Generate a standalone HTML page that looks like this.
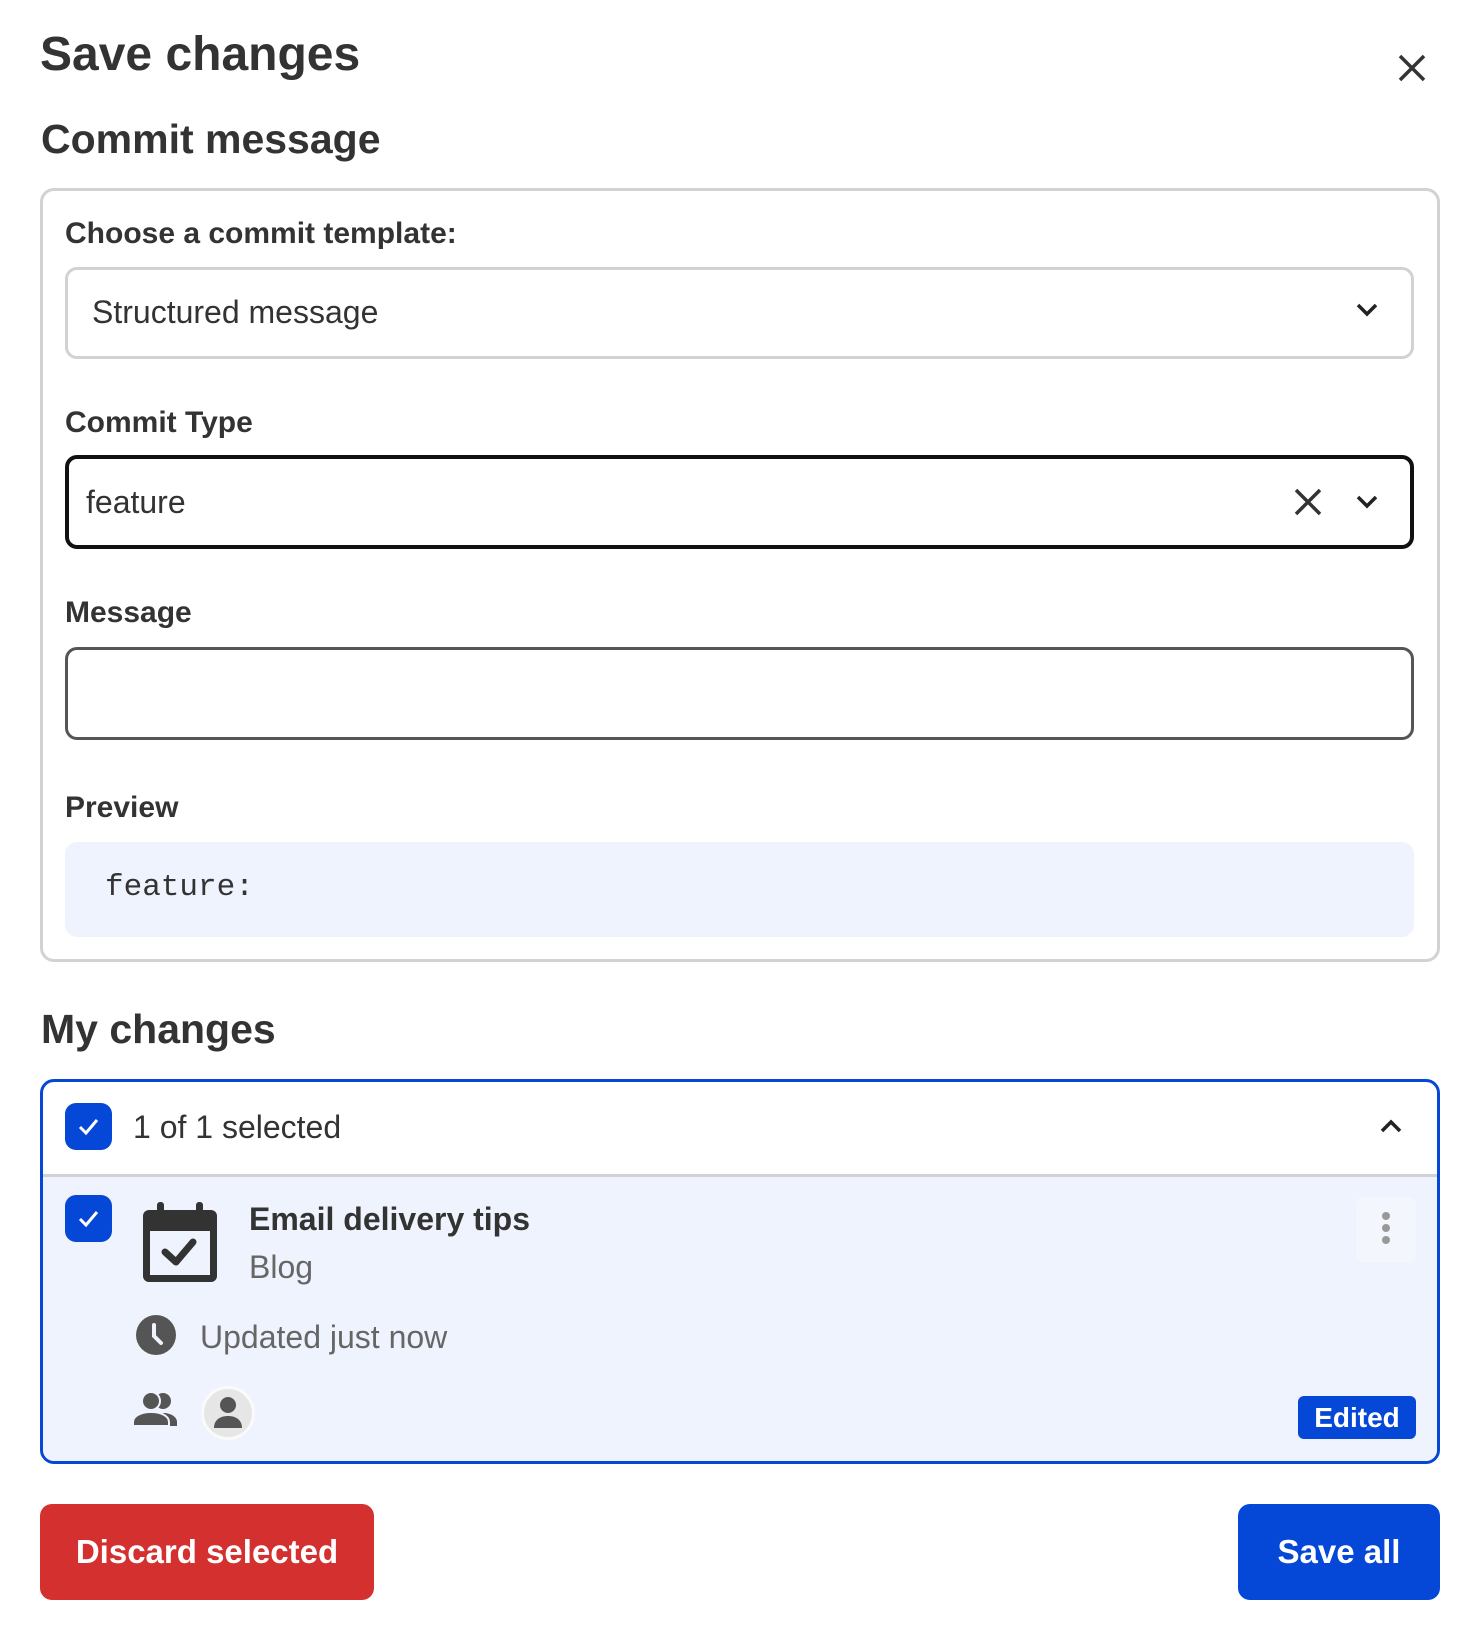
<!DOCTYPE html>
<html><head><style>
*{box-sizing:border-box;margin:0;padding:0}
html,body{width:1480px;height:1640px;background:#fff;overflow:hidden;font-family:"Liberation Sans",sans-serif;color:#333}
.a{position:absolute}
.h{font-weight:bold;color:#333}
.lbl{font-size:30px;font-weight:bold;color:#333;position:absolute;left:65px}
.box{position:absolute;left:65px;width:1349px;border-radius:12px}
.cb{position:absolute;width:47px;height:47px;background:#0547d6;border-radius:11px}
</style></head><body>
<div class="a h" style="left:40px;top:27px;font-size:48px">Save changes</div>
<svg class="a" style="left:1397px;top:53px" width="30" height="30" viewBox="0 0 30 30"><path d="M3 3L27 27M27 3L3 27" stroke="#333" stroke-width="3.5" fill="none"/></svg>
<div class="a h" style="left:41px;top:116px;font-size:41px">Commit message</div>

<div class="a" style="left:40px;top:188px;width:1400px;height:774px;border:3px solid #d2d2d2;border-radius:14px"></div>
<div class="lbl" style="top:217px">Choose a commit template:</div>
<div class="box" style="top:267px;height:92px;border:3px solid #d2d2d2"></div>
<div class="a" style="left:92px;top:294px;font-size:32px;color:#333">Structured message</div>
<svg class="a" style="left:1355px;top:302px" width="24" height="16" viewBox="0 0 24 16"><path d="M3 3L12 12L21 3" stroke="#222" stroke-width="3.5" fill="none"/></svg>

<div class="lbl" style="top:406px">Commit Type</div>
<div class="box" style="top:455px;height:94px;border:4px solid #111"></div>
<div class="a" style="left:86px;top:484px;font-size:32px;color:#333">feature</div>
<svg class="a" style="left:1293px;top:487px" width="30" height="30" viewBox="0 0 30 30"><path d="M3 3L27 27M27 3L3 27" stroke="#333" stroke-width="3.5" fill="none"/></svg>
<svg class="a" style="left:1355px;top:494px" width="24" height="16" viewBox="0 0 24 16"><path d="M3 3L12 12L21 3" stroke="#222" stroke-width="3.5" fill="none"/></svg>

<div class="lbl" style="top:596px">Message</div>
<div class="box" style="top:647px;height:93px;border:3px solid #555"></div>

<div class="lbl" style="top:791px">Preview</div>
<div class="box" style="top:842px;height:95px;background:#eef3fd"></div>
<div class="a" style="left:105px;top:870px;font-size:31px;font-family:'Liberation Mono',monospace;color:#333">feature:</div>

<div class="a h" style="left:41px;top:1006px;font-size:41px">My changes</div>

<div class="a" style="left:40px;top:1079px;width:1400px;height:385px;border:3px solid #0547d6;border-radius:14px;overflow:hidden">
  <div class="a" style="left:0;top:92px;width:1400px;height:300px;background:#eff3fd;border-top:3px solid #d2d2d2"></div>
</div>
<div class="cb" style="left:65px;top:1103px"></div>
<svg class="a" style="left:65px;top:1103px" width="47" height="47" viewBox="0 0 47 47"><path d="M15 24L21 30L32 17" stroke="#fff" stroke-width="3" fill="none"/></svg>
<div class="a" style="left:133px;top:1109px;font-size:32px;color:#333">1 of 1 selected</div>
<svg class="a" style="left:1379px;top:1118px" width="24" height="16" viewBox="0 0 24 16"><path d="M3 13L12 4L21 13" stroke="#222" stroke-width="3.5" fill="none"/></svg>

<div class="cb" style="left:65px;top:1195px"></div>
<svg class="a" style="left:65px;top:1195px" width="47" height="47" viewBox="0 0 47 47"><path d="M15 24L21 30L32 17" stroke="#fff" stroke-width="3" fill="none"/></svg>
<svg class="a" style="left:143px;top:1201px" width="74" height="82" viewBox="0 0 74 82"><rect x="0" y="9" width="74" height="72" rx="6" fill="#333"/><rect x="7" y="30" width="60" height="44" fill="#eff3fd"/><rect x="14" y="1" width="7" height="14" rx="3" fill="#333"/><rect x="53" y="1" width="7" height="14" rx="3" fill="#333"/><path d="M22 51L33 61L50 41" stroke="#333" stroke-width="7" fill="none" stroke-linecap="round" stroke-linejoin="round"/></svg>
<div class="a h" style="left:249px;top:1201px;font-size:32px">Email delivery tips</div>
<div class="a" style="left:249px;top:1249px;font-size:32px;color:#666">Blog</div>
<div class="a" style="left:1356px;top:1197px;width:60px;height:66px;background:#f3f6fd;border-radius:8px"></div>
<svg class="a" style="left:1380px;top:1210px" width="12" height="36" viewBox="0 0 12 36"><circle cx="6" cy="6" r="4" fill="#999"/><circle cx="6" cy="18" r="4" fill="#999"/><circle cx="6" cy="30" r="4" fill="#999"/></svg>

<svg class="a" style="left:135px;top:1314px" width="42" height="42" viewBox="0 0 42 42"><circle cx="21" cy="21" r="20" fill="#555"/><path d="M19 11V22L26 29" stroke="#eff3fd" stroke-width="4" fill="none" stroke-linecap="round"/></svg>
<div class="a" style="left:200px;top:1319px;font-size:32px;color:#666">Updated just now</div>

<svg class="a" style="left:133px;top:1391px" width="46" height="36" viewBox="0 0 46 36"><circle cx="30" cy="10" r="8" fill="#555"/><path d="M30 22c8 0 14 4 14 9v4H30z" fill="#555"/><circle cx="18" cy="10" r="9" fill="#555" stroke="#eff3fd" stroke-width="2"/><path d="M0 35v-4c0-6 8-10 18-10s18 4 18 10v4z" fill="#555" stroke="#eff3fd" stroke-width="2"/></svg>
<div class="a" style="left:201px;top:1386px;width:54px;height:54px;border-radius:50%;background:#e6e6e6;border:3px solid #fafafa"></div>
<svg class="a" style="left:211px;top:1394px" width="34" height="36" viewBox="0 0 34 36"><circle cx="17" cy="11" r="8" fill="#555"/><path d="M3 34c0-8 6-12 14-12s14 4 14 12z" fill="#555"/></svg>
<div class="a" style="left:1298px;top:1396px;width:118px;height:43px;background:#0547d6;border-radius:6px;color:#fff;font-weight:bold;font-size:28px;text-align:center;line-height:43px">Edited</div>

<div class="a" style="left:40px;top:1504px;width:334px;height:96px;background:#d3302f;border-radius:12px;color:#fff;font-weight:bold;font-size:33px;text-align:center;line-height:96px">Discard selected</div>
<div class="a" style="left:1238px;top:1504px;width:202px;height:96px;background:#0547d6;border-radius:12px;color:#fff;font-weight:bold;font-size:33px;text-align:center;line-height:96px">Save all</div>
</body></html>
